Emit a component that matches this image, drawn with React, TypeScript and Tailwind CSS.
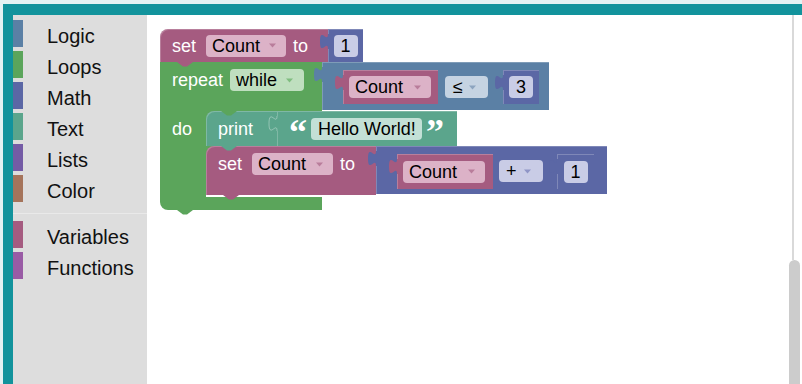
import React from "react";

const Tab = ({ color, stroke }: { color: string; stroke?: string }) => (
  <svg
    className="absolute -left-[8px] top-[5px] overflow-visible"
    width="9"
    height="15"
    viewBox="0 0 9 15"
  >
    <path d="M9,0 L8,0 C8,10 0,-8 0,7.5 C0,23 8,5 8,15 L9,15 Z" fill={color} />
    {stroke ? (
      <path d="M8,0 C8,10 0,-8 0,7.5 C0,23 8,5 8,15" fill="none" stroke={stroke} strokeWidth="1" />
    ) : null}
  </svg>
);

const Bump = ({ color, className }: { color: string; className: string }) => (
  <svg className={`absolute ${className}`} width="16" height="5" viewBox="0 0 16 5">
    <path d="M0,0 L6,4.5 L10,4.5 L16,0 Z" fill={color} />
  </svg>
);

const Arrow = ({ color }: { color: string }) => (
  <svg className="ml-auto shrink-0" width="7" height="5" viewBox="0 0 7 5">
    <path d="M0,0.5 L7,0.5 L3.5,4.5 Z" fill={color} />
  </svg>
);

const Dropdown = ({
  label,
  className,
  arrow,
}: {
  label: string;
  className: string;
  arrow: string;
}) => (
  <div className={`flex h-[22px] shrink-0 items-center rounded-[4px] text-black ${className}`}>
    <span className="leading-none">{label}</span>
    <Arrow color={arrow} />
  </div>
);

const NumberBlock = ({ value, className }: { value: string; className: string }) => (
  <div
    className={`relative flex shrink-0 items-center justify-center bg-[#5b67a5] shadow-[inset_1px_1px_0_rgba(255,255,255,0.22)] ${className}`}
  >
    <Tab color="#5b67a5" />
    <div className="flex h-[22px] w-[24px] items-center justify-center rounded-[4px] bg-[#c9cce6] leading-none text-black">
      {value}
    </div>
  </div>
);

const Getter = ({ className }: { className: string }) => (
  <div
    className={`relative flex shrink-0 items-center bg-[#a55b80] pl-[6px] shadow-[inset_1px_1px_0_rgba(255,255,255,0.22)] ${className}`}
  >
    <Tab color="#a55b80" />
    <Dropdown label="Count" className="w-[82px] bg-[#dcb2c7] pl-[6px] pr-[10px]" arrow="#b97d9b" />
  </div>
);

const categories = [
  { name: "Logic", bar: "bg-[#5b80a5]" },
  { name: "Loops", bar: "bg-[#5ba55b]" },
  { name: "Math", bar: "bg-[#5b67a5]" },
  { name: "Text", bar: "bg-[#5ba58c]" },
  { name: "Lists", bar: "bg-[#745ba5]" },
  { name: "Color", bar: "bg-[#a5745b]" },
];
const categories2 = [
  { name: "Variables", bar: "bg-[#a55b80]" },
  { name: "Functions", bar: "bg-[#995ba5]" },
];

const Row = ({ name, bar }: { name: string; bar: string }) => (
  <div className="flex h-[27px] items-start">
    <div className={`h-[27px] w-[10px] shrink-0 ${bar}`} />
    <span className="ml-[24px] mt-[5px] text-[20px] leading-[23px] text-[#111111]">{name}</span>
  </div>
);

const Toolbox = () => (
  <div className="flex w-[134px] shrink-0 flex-col gap-[4px] bg-[#dddddd] pt-[5px]">
    {categories.map((c) => (
      <Row key={c.name} {...c} />
    ))}
    <div className="mb-[3px] mt-[7px] h-px w-full bg-[#e9e9e9]" />
    {categories2.map((c) => (
      <Row key={c.name} {...c} />
    ))}
  </div>
);

const Blocks = () => (
  <div className="absolute left-[13px] top-[14px] text-[18px] text-white">
    {/* set Count to 1 */}
    <div className="flex">
      <div className="relative flex h-[33px] w-[168px] items-center rounded-tl-[8px] bg-[#a55b80] pl-[12px] shadow-[inset_1px_1px_0_rgba(255,255,255,0.22)]">
        <span className="leading-none">set</span>
        <Dropdown label="Count" className="ml-[10px] w-[80px] bg-[#dcb2c7] pl-[6px] pr-[10px]" arrow="#b97d9b" />
        <span className="ml-[7px] leading-none">to</span>
        <Bump color="#a55b80" className="left-[17px] top-[33px] z-10" />
      </div>
      <NumberBlock value="1" className="h-[33px] w-[35px]" />
    </div>

    {/* repeat while */}
    <div className="flex">
      <div className="relative h-[49px] w-[162px] shrink-0 bg-[#5ba55b] pl-[12px] pt-[7px]">
        <div className="flex h-[22px] items-center">
          <span className="leading-none">repeat</span>
          <Dropdown label="while" className="ml-[7px] w-[74px] bg-[#bfdfbf] pl-[6px] pr-[11px]" arrow="#80bd80" />
        </div>
      </div>
      <div className="relative flex h-[48px] w-[227px] shrink-0 items-start bg-[#5b80a5] pl-[21px] pt-[8px] shadow-[inset_1px_1px_0_rgba(255,255,255,0.22)]">
        <Tab color="#5b80a5" />
        <Getter className="h-[34px] w-[95px]" />
        <Dropdown label="≤" className="ml-[7px] mt-[6px] w-[43px] bg-[#c5d3e2] pl-[8px] pr-[12px]" arrow="#8ca4bf" />
        <NumberBlock value="3" className="ml-[15px] h-[34px] w-[36px]" />
      </div>
    </div>

    {/* do section */}
    <div className="flex">
      <div className="w-[46px] shrink-0 bg-[#5ba55b] pl-[12px]">
        <div className="flex h-[35px] items-center leading-none">do</div>
      </div>
      <div className="flex flex-col items-start pb-[2px]">
        {/* print "Hello World!" */}
        <div className="flex">
          <div className="bg-[#5ba55b]">
            <div className="relative flex h-[35px] w-[71px] items-center rounded-tl-[8px] bg-[#5ba58c] pl-[12px] shadow-[inset_1px_1px_0_rgba(255,255,255,0.22)]">
              <span className="leading-none">print</span>
              <Bump color="#5ba55b" className="left-[15px] top-0" />
              <Bump color="#5ba58c" className="left-[15px] top-[35px] z-10" />
            </div>
          </div>
          <div className="relative flex h-[35px] w-[180px] items-center bg-[#5ba58c] pl-[12px] shadow-[inset_1px_1px_0_rgba(255,255,255,0.22)]">
            <Tab color="#5ba58c" stroke="rgba(255,255,255,0.35)" />
            <span className="relative top-[3px] h-[22px] w-[16px] font-['Liberation_Serif',serif] text-[36px] font-bold leading-[22px]">
              “
            </span>
            <div className="ml-[6px] flex h-[22px] w-[111px] items-center rounded-[4px] bg-[#c3e0d6] pl-[7px] leading-none text-black">
              Hello World!
            </div>
            <span className="relative top-[3px] ml-[4px] h-[22px] w-[16px] font-['Liberation_Serif',serif] text-[36px] font-bold leading-[22px]">
              ”
            </span>
          </div>
        </div>

        {/* set Count to Count + 1 */}
        <div className="flex items-start">
          <div className="bg-[#5ba55b]">
            <div className="relative h-[49px] w-[170px] rounded-tl-[8px] bg-[#a55b80] pl-[12px] pt-[7px] shadow-[inset_1px_1px_0_rgba(255,255,255,0.22)]">
              <div className="flex h-[22px] items-center">
                <span className="leading-none">set</span>
                <Dropdown label="Count" className="ml-[10px] w-[81px] bg-[#dcb2c7] pl-[6px] pr-[10px]" arrow="#b97d9b" />
                <span className="ml-[7px] leading-none">to</span>
              </div>
              <Bump color="#a55b80" className="left-[17px] top-[49px] z-10" />
            </div>
          </div>
          <div className="relative flex h-[48px] w-[231px] shrink-0 items-start bg-[#5b67a5] pl-[21px] pt-[8px] shadow-[inset_1px_1px_0_rgba(255,255,255,0.22)]">
            <Tab color="#5b67a5" />
            <Getter className="h-[35px] w-[96px]" />
            <Dropdown label="+" className="ml-[6px] mt-[6px] w-[44px] bg-[#c9cce6] pl-[7px] pr-[12px]" arrow="#8f95c6" />
            <NumberBlock value="1" className="ml-[14px] h-[35px] w-[37px]" />
          </div>
        </div>
      </div>
    </div>

    {/* bottom arm of repeat */}
    <div className="relative h-[13px] w-[162px] rounded-bl-[8px] bg-[#5ba55b]">
      <Bump color="#5ba55b" className="left-[17px] top-[13px]" />
    </div>
  </div>
);

const Workspace = () => (
  <div className="relative flex-1 bg-white">
    <Blocks />
    <div className="absolute right-[8px] top-0 h-[245px] w-[2px] bg-[#d9d9d9]" />
    <div className="absolute right-[2px] top-[245px] h-[140px] w-[11px] rounded-t-[6px] bg-[#cccccc]" />
  </div>
);

export default function App() {
  return (
    <div className="relative h-[384px] w-[802px] overflow-hidden bg-[#e4f2f3] pl-[3px] pt-[4px] font-['Liberation_Sans',Arial,sans-serif]">
      <div className="flex h-[380px] border-l-[10px] border-t-[11px] border-[#12939c]">
        <Toolbox />
        <Workspace />
      </div>
    </div>
  );
}
